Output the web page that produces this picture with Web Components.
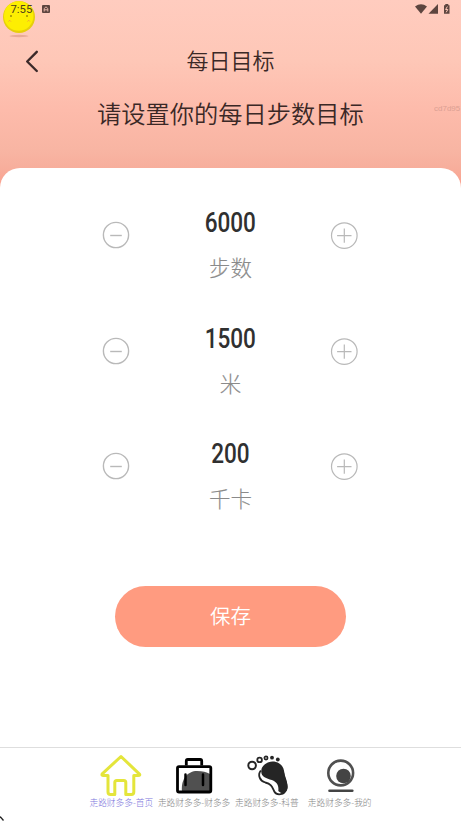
<!DOCTYPE html>
<html lang="zh-CN">
<head>
<meta charset="utf-8">
<title>每日目标</title>
<style>
html,body{margin:0;height:100%;background:#fff}
body{font-family:"Noto Sans CJK SC","Noto Sans",sans-serif;color:#3a2826}
</style>
</head>
<body>
<goal-page></goal-page>
<script>
class Base extends HTMLElement {
  mount(html) { this.attachShadow({ mode: 'open' }).innerHTML = html; }
}

customElements.define('status-bar', class extends Base {
  connectedCallback() {
    this.mount(`<style>
:host{display:flex;position:relative;height:20px;color:#5d453f}
svg{display:block}
.coin{position:absolute;left:0;top:0}
time{position:absolute;left:10.5px;top:3px;font:400 11.3px/13px Roboto,sans-serif;color:#4f401c}
.app{position:absolute;left:42px;top:5px}
.sys{position:absolute;left:414px;top:2px}
</style>
<svg class="coin" width="40" height="40" viewBox="0 0 40 40">
<ellipse cx="19" cy="36" rx="9.5" ry="1.2" fill="#e8aa98"/>
<circle cx="19" cy="17" r="16" fill="#e6cf0c"/><circle cx="18.7" cy="16" r="14.7" fill="#fdee02"/>
<circle cx="11" cy="16" r=".8" fill="#5c4a0a"/><circle cx="27" cy="16" r=".8" fill="#5c4a0a"/>
<path d="M8.5 21.5l1.2-1.2 1.2 1.2M27.5 21.5l1.2-1.2 1.2 1.2" fill="none" stroke="#f3a33a"/>
</svg>
<time>7:55</time>
<svg class="app" width="8" height="8" viewBox="0 0 8 8"><rect width="8" height="8" rx="1" fill="#5d453f"/><path d="M2.2 6.5V3.5L4 1.8l1.8 1.7v3M2.2 4.8h3.6" fill="none" stroke="#e9b7ab"/></svg>
<svg class="sys" width="38" height="14" viewBox="0 0 38 14"><g fill="#5d453f"><path d="M1 4.4Q7 .2 13 4.4L7 11.8z"/><path d="M24 2v9.8h-9.5z"/><path d="M30 3.2h1.3V2h3v1.2h1.2v8.6H30z"/></g><path d="M33.4 4.5l-1.8 3h2.2l-1.6 2.8" fill="none" stroke="#ffc7b8"/></svg>`);
  }
});

customElements.define('goal-header', class extends Base {
  connectedCallback() {
    this.mount(`<style>
:host{display:block;height:188px;position:relative;background:linear-gradient(#ffccbf 0,#fec7b7 60px,#fdbbab 110px,#f8b5a3 150px,#f7ae9c 168px,#fb9f8c 188px)}
.bar{display:grid;grid-template-columns:64px 1fr 64px;align-items:center;height:40px;padding-top:1px}
svg{display:block;margin-left:24px}
h1{margin:-5px 0 0;text-align:center;font-size:22px;line-height:32px;font-weight:350}
h2{margin:12px 0 0;text-align:center;font-size:24.25px;line-height:36px;font-weight:350;padding-top:1.5px}
.mark{position:absolute;right:-1px;top:103px;width:28px;overflow:hidden;white-space:nowrap;font:8px/12px "Liberation Sans",sans-serif;color:#dba093}
</style>
<status-bar></status-bar>
<div style="height:20px"></div>
<div class="bar"><svg width="18" height="24" viewBox="0 0 18 24"><path d="M12.8 2.8L3.2 12.5l9.6 9.5" fill="none" stroke="#3b2a2a" stroke-width="2.4" stroke-linecap="round" stroke-linejoin="round"/></svg><h1>每日目标</h1></div>
<h2>请设置你的每日步数目标</h2><span class="mark">cd7d95</span>`);
  }
});

customElements.define('goal-stepper', class extends Base {
  connectedCallback() {
    this.mount(`<style>
:host{display:grid;grid-template-columns:28px 1fr 28px;height:115.5px;padding:0 103px 0 102px;box-sizing:border-box}
svg{display:block;margin-top:24px;fill:none;stroke:#b9b9b9;stroke-width:1.4}
.text{display:flex;flex-direction:column;align-items:center}
.num{font:500 27.5px/32px Roboto,sans-serif;color:#303030;transform:scaleX(.82);margin:10px 0 0 1px}
.unit{font-size:21.5px;line-height:32px;color:#8a8a8a;font-weight:300;margin:12px 0 0 1px;-webkit-text-stroke:.15px #8a8a8a}
</style>
<svg width="28" height="28" viewBox="0 0 28 28"><circle cx="14" cy="14" r="12.6"/><path d="M8.2 14.5h11.6"/></svg>
<div class="text"><span class="num">${this.getAttribute('value')}</span><span class="unit"><slot></slot></span></div>
<svg width="28" height="28" viewBox="0 0 28 28"><circle cx="14.3" cy="14.6" r="12.8" stroke-width="1.2"/><path d="M7.1 14.6h14.4M14.3 7.4v14.4" stroke-width="1.2"/></svg>`);
  }
});

customElements.define('save-button', class extends Base {
  connectedCallback() {
    this.mount(`<style>
:host{display:block;width:231px;margin:42px auto 0}
button{display:block;width:100%;height:61px;border:0;border-radius:31px;background:#ff9b80;color:#fff;font:350 20.5px/30px "Noto Sans CJK SC",sans-serif;padding:0 0 2px}
</style><button><slot></slot></button>`);
  }
});

const icons = {
  home: `<path d="M22 3.5L3.2 20.8Q2.4 22.6 4.4 22.6H9V39q0 2.5 2.5 2.5h4.3V29.5q0-2 2-2h7q2 0 2 2v12h5.5q2.5 0 2.5-2.5V22.6h4.2q2.8 0 1.2-1.8Z" fill="none" stroke="#e4e53b" stroke-width="3" stroke-linejoin="round"/>`,
  bag: `<path d="M10 39C8.5 25.5 16 18 25 18q8 0 13 3V39z" fill="#505050"/><g fill="none" stroke="#000" stroke-width="2.8" stroke-linejoin="round"><rect x="5.5" y="13.6" width="33.3" height="25.4" rx="1.5"/><path d="M14.3 12.5V8q0-1.5 1.5-1.5h12.4q1.5 0 1.5 1.5V12.5"/></g><path d="M13.5 21.5v10.5M31 21.5v10.5" stroke="#000" stroke-width="2.5" stroke-linecap="round"/>`,
  foot: `<g transform="translate(.8 0)"><g fill="none" stroke="#252525"><circle cx="6.3" cy="12.5" r="3.8" stroke-width="2"/><circle cx="13.8" cy="6.9" r="2.3" stroke-width="1.8"/><circle cx="20.2" cy="5" r="1.6" stroke-width="1.7"/><path d="M15 17.5C11.5 22 14 28 19.5 29.5C26 31 26.5 34.5 28.5 38.5C31 43 39 42 40.5 36C42 30 38.5 25 37.5 20" stroke-width="1.8"/></g><circle cx="26.2" cy="4.7" r="1.9" fill="#252525"/><circle cx="32" cy="6.5" r="1.9" fill="#252525"/><path d="M16 15C19 9 27 6.5 33.5 10.5C39.5 14.5 38 20 39.5 25C41 30 43.5 34.5 40.2 38.5Q36 42 32.5 38C33 33 32 29.5 26 27C20 25 13.5 23.5 16 15Z" fill="#252525"/></g>`,
  me: `<g transform="translate(1 0)"><circle cx="21.7" cy="20" r="12.4" fill="none" stroke="#505050" stroke-width="2.6"/><circle cx="24.5" cy="23" r="7.3" fill="#444"/><path d="M10.5 37.7h22.8" stroke="#444" stroke-width="2.6" stroke-linecap="round"/></g>`
};
customElements.define('nav-item', class extends Base {
  connectedCallback() {
    this.mount(`<style>
:host{display:flex;flex-direction:column;align-items:center;width:72.8px;color:#858585}
:host([active]){color:#7c75dc}
svg{display:block}
span{white-space:nowrap;font-size:8.7px;line-height:12px;font-weight:300;margin-top:-1px}
</style><svg width="44" height="45" viewBox="0 0 44 45">${icons[this.getAttribute('icon')]}</svg><span><slot></slot></span>`);
  }
});

customElements.define('bottom-nav', class extends Base {
  connectedCallback() {
    this.mount(`<style>
:host{display:flex;justify-content:center;box-sizing:border-box;height:74px;border-top:1px solid #dedede;padding:5px 0 0;background:#fff}
</style><nav-item icon="home" active>走路财多多-首页</nav-item><nav-item icon="bag">走路财多多-财多多</nav-item><nav-item icon="foot">走路财多多-科普</nav-item><nav-item icon="me">走路财多多-我的</nav-item>`);
  }
});

customElements.define('goal-page', class extends Base {
  connectedCallback() {
    this.mount(`<style>
:host{display:flex;flex-direction:column;width:461px;height:821px;overflow:hidden;position:relative;background:#fff}
goal-header{flex:none}
main{position:relative;flex:1;margin-top:-20px;padding-top:29px;border-radius:20px 20px 0 0;background:#fff;box-sizing:border-box}
.corner{position:absolute;left:0;bottom:0}
</style>
<goal-header></goal-header>
<main>
<goal-stepper value="6000">步数</goal-stepper>
<goal-stepper value="1500">米</goal-stepper>
<goal-stepper value="200">千卡</goal-stepper>
<save-button>保存</save-button>
</main>
<bottom-nav></bottom-nav>
<svg class="corner" width="5" height="5"><path d="M0 .5L3.5 4.5" stroke="#222" stroke-width="1.3"/></svg>`);
  }
});
</script>
</body>
</html>
